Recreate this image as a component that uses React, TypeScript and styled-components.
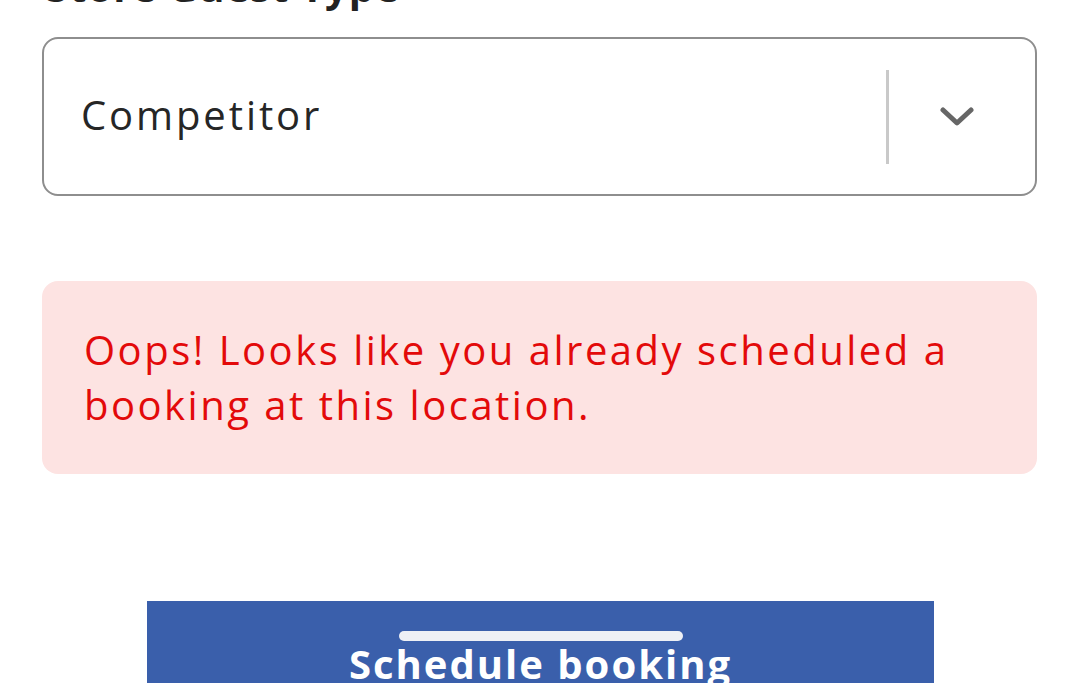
import React from "react";
import styled, { createGlobalStyle } from "styled-components";

const Global = createGlobalStyle`
  html, body { margin: 0; padding: 0; background: #ffffff; overflow: hidden; }
  body { font-family: "Open Sans", "Noto Sans", sans-serif; }
  * { box-sizing: border-box; }
`;

const Page = styled.div`
  width: 1080px;
  height: 683px;
  overflow: hidden;
  padding: 0 43px 0 42px;
  display: flex;
  flex-direction: column;
  & > * { flex-shrink: 0; }
`;

const Label = styled.div`
  margin-top: -37px;
  font-size: 40px;
  line-height: 48px;
  font-weight: 700;
  color: #222222;
  padding-left: 4px;
  letter-spacing: 1px;
`;

const Select = styled.div`
  margin-top: 26px;
  height: 159px;
  border: 2px solid #8e8e8e;
  border-radius: 16px;
  display: flex;
  align-items: center;
  background: #fff;
`;

const Value = styled.div`
  flex: 1;
  padding-left: 37px;
  padding-bottom: 5px;
  font-size: 40px;
  color: #262626;
  letter-spacing: 2.9px;
`;

const Divider = styled.div`
  width: 3px;
  height: 94px;
  background: #c9c9c9;
`;

const Indicator = styled.div`
  width: 146px;
  display: flex;
  justify-content: center;
  align-items: center;
  padding-right: 10px;
`;

const Alert = styled.div`
  margin-top: 85px;
  background: #fde3e2;
  border-radius: 16px;
  padding: 41px 30px 42px 42px;
  font-size: 40px;
  line-height: 55px;
  color: #e30a0a;
  letter-spacing: 2.5px;
`;

const ButtonWrap = styled.div`
  margin-top: 127px;
  display: flex;
  justify-content: center;
`;

const Button = styled.div`
  position: relative;
  width: 787px;
  height: 120px;
  margin-left: 2px;
  background: #3a5fab;
  color: #ffffff;
  font-size: 40px;
  font-weight: 700;
  text-align: center;
  padding-top: 36px;
  line-height: 54px;
  letter-spacing: 2px;
`;

const Handle = styled.div`
  position: absolute;
  top: 30px;
  left: 50%;
  width: 284px;
  height: 10px;
  margin-left: -142px;
  border-radius: 5px;
  background: #eef0f5;
`;

export default function App() {
  return (
    <>
      <Global />
      <Page>
        <Label>Store Guest Type</Label>
        <Select>
          <Value>Competitor</Value>
          <Divider />
          <Indicator>
            <svg width="34" height="22" viewBox="0 0 34 22">
              <polyline
                points="3,4 17,17 31,4"
                fill="none"
                stroke="#666666"
                strokeWidth="5"
                strokeLinecap="round"
                strokeLinejoin="round"
              />
            </svg>
          </Indicator>
        </Select>
        <Alert>Oops! Looks like you already scheduled a booking at this location.</Alert>
        <ButtonWrap>
          <Button>
            <Handle />
            Schedule booking
          </Button>
        </ButtonWrap>
      </Page>
    </>
  );
}
